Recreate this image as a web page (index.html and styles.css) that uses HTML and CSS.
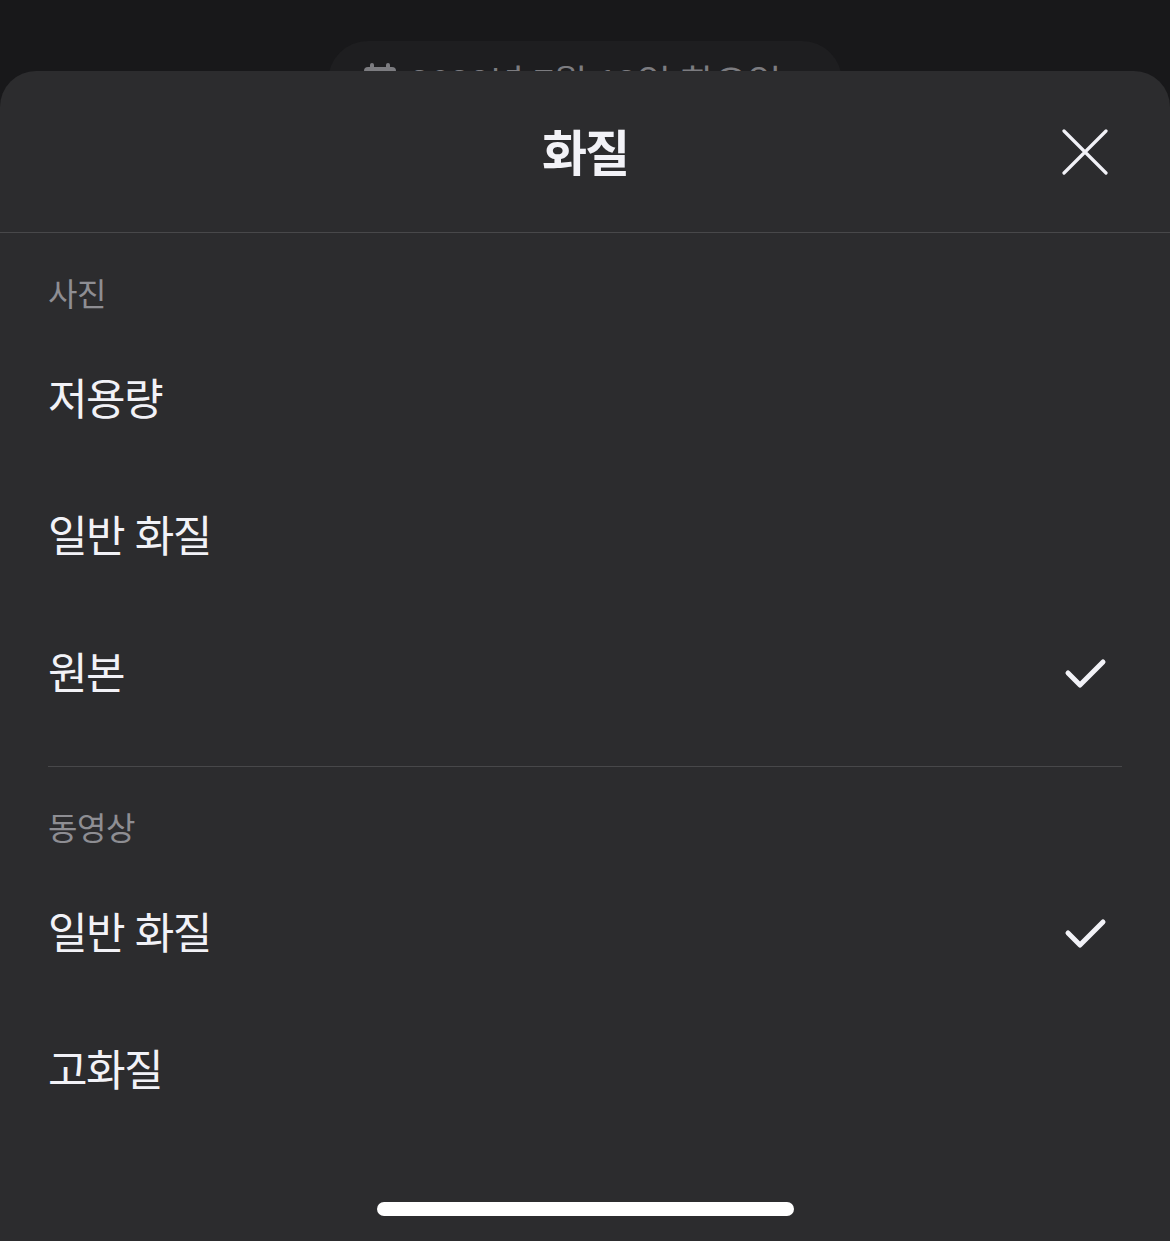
FILE: index.html
```html
<!DOCTYPE html>
<html lang="ko">
<head>
    <meta charset="UTF-8">
    <meta name="viewport" content="width=device-width, initial-scale=1.0">
    <title>화질</title>
    <link rel="stylesheet" href="styles.css">
</head>
<body>
    <div class="backdrop">
        <div class="date-pill">
            <svg class="cal-icon" viewBox="0 0 36 36" width="36" height="36">
                <rect x="2" y="4" width="32" height="30" rx="4" fill="#7c7c80"/>
                <rect x="8" y="0" width="4" height="8" rx="2" fill="#7c7c80"/>
                <rect x="24" y="0" width="4" height="8" rx="2" fill="#7c7c80"/>
            </svg>
            <span>2023년 7월 12일 화요일 ›</span>
        </div>
    </div>

    <div class="sheet">
        <div class="sheet-header">
            <h1>화질</h1>
            <svg class="close" viewBox="0 0 46 46" width="46" height="46">
                <path d="M2 2 L44 44 M44 2 L2 44" stroke="#f2f2f7" stroke-width="3.2" stroke-linecap="round" fill="none"/>
            </svg>
        </div>

        <div class="section">
            <div class="section-label">사진</div>
            <ul class="options">
                <li>저용량</li>
                <li>일반 화질</li>
                <li class="selected">원본
                    <svg class="check" viewBox="0 0 44 32" width="44" height="32"><path d="M4 15 L16 27 L39 4" stroke="#f2f2f7" stroke-width="5" stroke-linecap="round" stroke-linejoin="round" fill="none"/></svg>
                </li>
            </ul>
        </div>

        <div class="section last">
            <div class="section-label">동영상</div>
            <ul class="options">
                <li class="selected">일반 화질
                    <svg class="check" viewBox="0 0 44 32" width="44" height="32"><path d="M4 15 L16 27 L39 4" stroke="#f2f2f7" stroke-width="5" stroke-linecap="round" stroke-linejoin="round" fill="none"/></svg>
                </li>
                <li>고화질</li>
            </ul>
        </div>

        <div class="home-indicator"></div>
    </div>
</body>
</html>
```

FILE: styles.css
```css
* {
    box-sizing: border-box;
}
body {
    margin: 0;
    height: 1241px;
    overflow: hidden;
    background-color: #18181a;
    font-family: "Noto Sans CJK KR", "Noto Sans", sans-serif;
    color: #f2f2f7;
    position: relative;
}
.backdrop {
    display: flex;
    justify-content: center;
    padding-top: 41px;
}
.date-pill {
    width: 514px;
    height: 80px;
    border-radius: 40px;
    background: #1e1e20;
    display: flex;
    align-items: flex-start;
    padding-left: 34px;
    padding-top: 18px;
    gap: 12px;
    color: #7c7c80;
    font-size: 37px;
    line-height: 1.2;
    letter-spacing: -0.5px;
}
.cal-icon {
    flex-shrink: 0;
    margin-top: 4px;
}
.sheet {
    position: absolute;
    top: 71px;
    left: 0;
    right: 0;
    bottom: 0;
    background: #2c2c2e;
    border-radius: 36px 36px 0 0;
}
.sheet-header {
    height: 162px;
    border-bottom: 1px solid #48484a;
    display: flex;
    justify-content: center;
    align-items: center;
    position: relative;
}
.sheet-header h1 {
    margin: 0 0 4px;
    font-size: 49px;
    font-weight: 700;
    letter-spacing: -2px;
    line-height: 1;
}
.close {
    position: absolute;
    right: 62px;
    top: 58px;
}
.section {
    margin: 0 48px;
    padding-top: 39px;
    padding-bottom: 26px;
    border-bottom: 1px solid #48484a;
}
.section.last {
    border-bottom: none;
}
.section-label {
    height: 40px;
    line-height: 40px;
    font-size: 32px;
    color: #8e8e93;
    letter-spacing: -0.5px;
}
.options {
    list-style: none;
    margin: 17px 0 0;
    padding: 0;
}
.options li {
    height: 137px;
    display: flex;
    align-items: center;
    justify-content: space-between;
    font-size: 43px;
    letter-spacing: -1.5px;
    padding-bottom: 4px;
}
.check {
    margin-right: 14px;
    margin-top: 8px;
}
.home-indicator {
    position: absolute;
    left: 377px;
    bottom: 25px;
    width: 417px;
    height: 14px;
    border-radius: 7px;
    background: #ffffff;
}
```
